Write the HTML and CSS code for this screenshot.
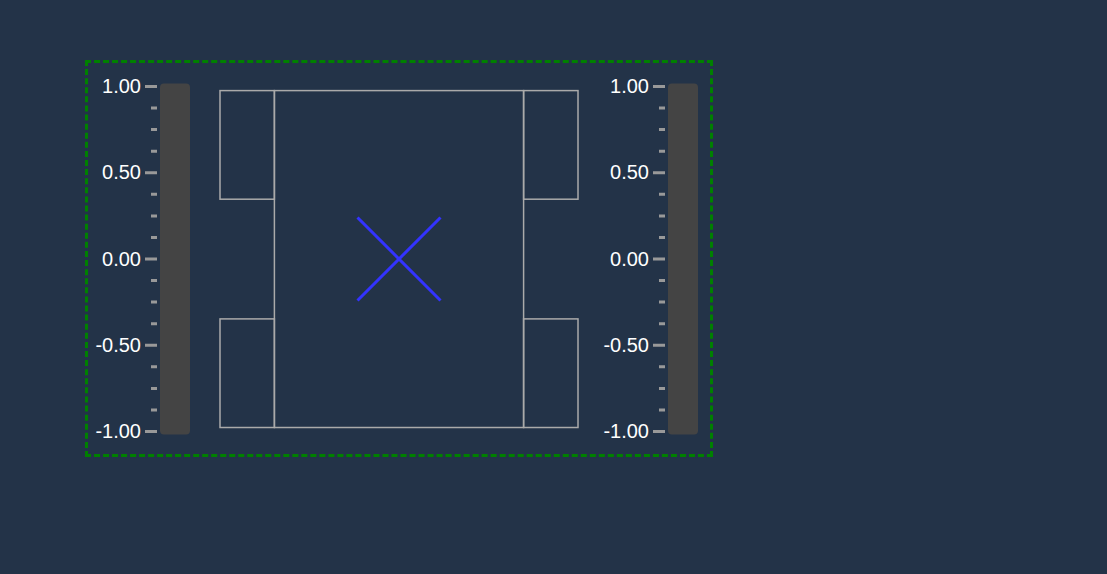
FILE: index.html
```
<!DOCTYPE html>
<html lang="en">
<head>
<meta charset="utf-8">
<title>Drive base</title>
<link rel="stylesheet" href="styles.css">
</head>
<body>
<main class="widget">
  <section class="gauge" aria-label="Left speed">
    <div class="labels"><span>1.00</span><span>0.50</span><span>0.00</span><span>-0.50</span><span>-1.00</span></div>
    <svg class="scale" viewBox="0 0 45 352" aria-hidden="true">
      <path class="tick" d="M0 3.5h12M0 89.7h12M0 176h12M0 262.2h12M0 348.5h12M6 25.1h6M6 46.6h6M6 68.2h6M6 111.3h6M6 132.9h6M6 154.4h6M6 197.6h6M6 219.1h6M6 240.7h6M6 283.8h6M6 305.4h6M6 326.9h6"/>
      <rect class="bar" x="15" y="0.5" width="30" height="351" rx="4"/>
    </svg>
  </section>
  <svg class="chassis" viewBox="0 0 362 340" aria-hidden="true">
    <g class="outline">
      <rect x="56.4" y="1.6" width="249.2" height="336.9"/>
      <rect x="2" y="1.6" width="54.4" height="108.6"/>
      <rect x="305.6" y="1.6" width="54.4" height="108.6"/>
      <rect x="2" y="229.9" width="54.4" height="108.6"/>
      <rect x="305.6" y="229.9" width="54.4" height="108.6"/>
    </g>
    <path class="cross" d="M139.5 128.5l83 83M222.5 128.5l-83 83"/>
  </svg>
  <section class="gauge" aria-label="Right speed">
    <div class="labels"><span>1.00</span><span>0.50</span><span>0.00</span><span>-0.50</span><span>-1.00</span></div>
    <svg class="scale" viewBox="0 0 45 352" aria-hidden="true">
      <path class="tick" d="M0 3.5h12M0 89.7h12M0 176h12M0 262.2h12M0 348.5h12M6 25.1h6M6 46.6h6M6 68.2h6M6 111.3h6M6 132.9h6M6 154.4h6M6 197.6h6M6 219.1h6M6 240.7h6M6 283.8h6M6 305.4h6M6 326.9h6"/>
      <rect class="bar" x="15" y="0.5" width="30" height="351" rx="4"/>
    </svg>
  </section>
</main>
</body>
</html>
```
FILE: styles.css
```
body {
  margin: 0;
  padding: 60px 85px;
  background: #233348;
  color: #fff;
  font-family: "Liberation Sans", Arial, sans-serif;
}

.widget {
  box-sizing: border-box;
  max-width: 628px;
  padding: 10px 12px 10px 0;
  border: 3px dashed green;
  display: flex;
  justify-content: space-between;
  align-items: center;
}

.gauge {
  display: flex;
  align-items: center;
  gap: 4px;
}

.labels {
  width: 53px;
  height: 371px;
  display: flex;
  flex-direction: column;
  justify-content: space-between;
  font-size: 20px;
  line-height: 26px;
  text-align: right;
}

.scale {
  width: 45px;
  height: 352px;
}

.tick {
  stroke: #999;
  stroke-width: 3;
}

.bar {
  fill: #444;
}

.chassis {
  width: 362px;
  height: 340px;
  margin-left: 12px;
}

.outline {
  fill: none;
  stroke: #aaa;
  stroke-width: 1.5;
}

.cross {
  fill: none;
  stroke: #33f;
  stroke-width: 3;
}
```
